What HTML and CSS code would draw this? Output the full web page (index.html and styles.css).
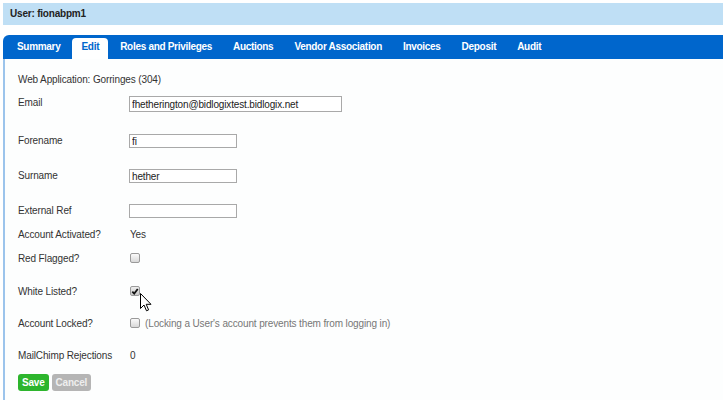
FILE: index.html
```html
<!DOCTYPE html>
<html lang="en">

<head>
    <meta charset="UTF-8">
    <title>User: fionabpm1</title>
    <link rel="stylesheet" href="styles.css">
</head>

<body>
    <div class="userbar">User: fionabpm1</div>

    <ul class="tabs">
        <li>Summary</li>
        <li class="active">Edit</li>
        <li>Roles and Privileges</li>
        <li>Auctions</li>
        <li>Vendor Association</li>
        <li>Invoices</li>
        <li>Deposit</li>
        <li>Audit</li>
    </ul>

    <section class="panel">
        <div class="row r-app">Web Application: Gorringes (304)</div>

        <div class="row r-email">
            <span class="label">Email</span>
            <input class="text wide" type="text" value="fhetherington@bidlogixtest.bidlogix.net">
        </div>
        <div class="row r-field">
            <span class="label">Forename</span>
            <input class="text" type="text" value="fi">
        </div>
        <div class="row r-field">
            <span class="label">Surname</span>
            <input class="text" type="text" value="hether">
        </div>
        <div class="row r-short">
            <span class="label">External Ref</span>
            <input class="text" type="text" value="">
        </div>
        <div class="row r-short">
            <span class="label">Account Activated?</span>
            <span class="value">Yes</span>
        </div>
        <div class="row r-check">
            <span class="label">Red Flagged?</span>
            <span class="box"></span>
        </div>
        <div class="row r-check2">
            <span class="label">White Listed?</span>
            <span class="box checked">
                <svg width="9" height="9" viewBox="0 0 9 9"><path d="M1.5 4.6 L3.6 6.8 L7.6 1.6" fill="none" stroke="#111" stroke-width="2"/></svg>
            </span>
            <svg class="cursor" width="12" height="19" viewBox="0 0 12 19"><path d="M0.5 0.5 L0.5 15.5 L4 12 L6.5 17.8 L8.6 16.9 L6.2 11.3 L11 11.3 Z" fill="#fff" stroke="#000" stroke-width="1"/></svg>
        </div>
        <div class="row r-check2">
            <span class="label">Account Locked?</span>
            <span class="box"></span>
            <span class="hint">(Locking a User's account prevents them from logging in)</span>
        </div>
        <div class="row r-last">
            <span class="label">MailChimp Rejections</span>
            <span class="value">0</span>
        </div>

        <div class="buttons">
            <button class="btn save">Save</button>
            <button class="btn cancel">Cancel</button>
        </div>
    </section>
</body>

</html>
```

FILE: styles.css
```css
body {
    margin: 0;
    font-family: "Liberation Sans", Arial, sans-serif;
    font-size: 10px;
    letter-spacing: -0.13px;
    color: #333;
    background: #fff;
}

.userbar {
    margin: 3px 0 0 3px;
    height: 22px;
    line-height: 22px;
    padding-left: 7px;
    background-color: #bfdff5;
    font-weight: bold;
    letter-spacing: -0.2px;
    color: #222;
}

.tabs {
    list-style: none;
    margin: 10px 0 0 3px;
    padding: 3px 0 0 5px;
    height: 21px;
    background-color: #0066cc;
    border-radius: 6px 0 0 0;
    display: flex;
    gap: 3px;
}

.tabs li {
    color: #fff;
    font-weight: bold;
    letter-spacing: -0.3px;
    padding: 0 9px;
    height: 21px;
    line-height: 18px;
}

.tabs li.active {
    background-color: #fff;
    color: #0066cc;
    border-radius: 4px 4px 0 0;
}

.panel {
    margin-left: 3px;
    border-left: 2px solid #9cc4ec;
    background-color: #fdfefe;
    padding: 14px 0 0 13px;
    box-sizing: border-box;
    height: 341px;
}

.row {
    display: flex;
    align-items: flex-start;
    line-height: 14px;
    position: relative;
}

.r-app { height: 23px; }
.r-email { height: 38px; }
.r-field { height: 35px; }
.r-short { height: 24px; }
.r-check { height: 33px; }
.r-check2 { height: 32px; }
.r-last { height: 25px; }

.label {
    width: 111px;
    flex: none;
}

.value {
    padding-left: 1px;
}

.text {
    box-sizing: border-box;
    width: 108px;
    height: 14px;
    margin: 0;
    padding: 0 2px;
    border: 1px solid #a9a9a9;
    font-family: "Liberation Sans", Arial, sans-serif;
    font-size: 10px;
    letter-spacing: -0.15px;
    color: #222;
    background: #fff;
}

.text.wide {
    width: 213px;
    height: 16px;
}

.box {
    box-sizing: border-box;
    width: 10px;
    height: 10px;
    margin: 1px 0 0 1px;
    border: 1px solid #9a9a9a;
    border-radius: 2px;
    background: linear-gradient(#fafafa, #d8d8d8);
    display: flex;
    align-items: center;
    justify-content: center;
}

.box.checked {
    background: linear-gradient(#eee, #c8c8c8);
}

.box svg {
    display: block;
}

.hint {
    margin-left: 5px;
    color: #777;
}

.cursor {
    position: absolute;
    left: 122px;
    top: 8px;
}

.buttons {
    display: flex;
    gap: 3px;
}

.btn {
    border: none;
    border-radius: 3px;
    height: 17px;
    padding: 0 4px;
    font-family: "Liberation Sans", Arial, sans-serif;
    font-size: 10px;
    letter-spacing: -0.2px;
    font-weight: bold;
    color: #fff;
}

.save {
    background-color: #2db52d;
}

.cancel {
    background-color: #b5b5b5;
    color: #eee;
}
```
